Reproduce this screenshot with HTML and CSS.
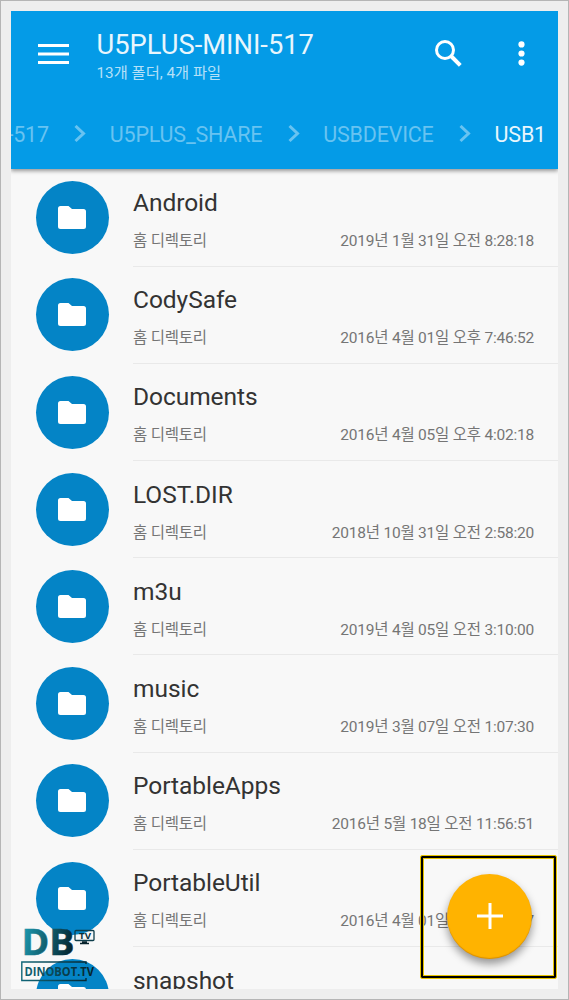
FILE: index.html
```html
<!DOCTYPE html>
<html lang="ko">
<head>
    <meta charset="UTF-8">
    <meta name="viewport" content="width=device-width, initial-scale=1.0">
    <title>U5PLUS-MINI-517</title>
    <link rel="stylesheet" href="styles.css">
</head>
<body>
    <!-- Shared icons -->
    <svg class="icon-defs" width="0" height="0">
        <symbol id="folder" viewBox="0 0 28 23">
            <path d="M2.5 0H10.5L14 3H25.5Q28 3 28 5.5V20.5Q28 23 25.5 23H2.5Q0 23 0 20.5V2.5Q0 0 2.5 0Z" fill="#fff"/>
        </symbol>
        <symbol id="chevron" viewBox="0 0 12 18">
            <path d="M1.5 1L9.5 8.5L1.5 16" fill="none" stroke="currentColor" stroke-width="3"/>
        </symbol>
    </svg>

    <div class="screen">
        <header>
            <div class="toolbar">
                <svg class="menu" viewBox="0 0 31 20"><path d="M0 1.5H31M0 10H31M0 18.5H31" stroke="#fff" stroke-width="3"/></svg>
                <div class="title">
                    <h1>U5PLUS-MINI-517</h1>
                    <p>13개 폴더, 4개 파일</p>
                </div>
                <svg class="search" viewBox="0 0 27 27"><circle cx="10" cy="10" r="8.5" fill="none" stroke="#fff" stroke-width="3"/><path d="M16 16L25.3 25.3" stroke="#fff" stroke-width="4"/></svg>
                <svg class="more" viewBox="0 0 7 25"><g fill="#fff"><circle cx="3.5" cy="3.4" r="3.1"/><circle cx="3.5" cy="12.5" r="3.1"/><circle cx="3.5" cy="21.6" r="3.1"/></g></svg>
            </div>
            <nav class="path">
                <span>U5PLUS-MINI-517</span>
                <svg><use href="#chevron"/></svg>
                <span>U5PLUS_SHARE</span>
                <svg><use href="#chevron"/></svg>
                <span>USBDEVICE</span>
                <svg><use href="#chevron"/></svg>
                <span class="current">USB1</span>
            </nav>
        </header>

        <!-- Folder list -->
        <ul class="files">
            <li>
                <div class="avatar"><svg><use href="#folder"/></svg></div>
                <div class="info"><h2>Android</h2><p><span>홈 디렉토리</span><time>2019년 1월 31일 오전 8:28:18</time></p></div>
            </li>
            <li>
                <div class="avatar"><svg><use href="#folder"/></svg></div>
                <div class="info"><h2>CodySafe</h2><p><span>홈 디렉토리</span><time>2016년 4월 01일 오후 7:46:52</time></p></div>
            </li>
            <li>
                <div class="avatar"><svg><use href="#folder"/></svg></div>
                <div class="info"><h2>Documents</h2><p><span>홈 디렉토리</span><time>2016년 4월 05일 오후 4:02:18</time></p></div>
            </li>
            <li>
                <div class="avatar"><svg><use href="#folder"/></svg></div>
                <div class="info"><h2>LOST.DIR</h2><p><span>홈 디렉토리</span><time>2018년 10월 31일 오전 2:58:20</time></p></div>
            </li>
            <li>
                <div class="avatar"><svg><use href="#folder"/></svg></div>
                <div class="info"><h2>m3u</h2><p><span>홈 디렉토리</span><time>2019년 4월 05일 오전 3:10:00</time></p></div>
            </li>
            <li>
                <div class="avatar"><svg><use href="#folder"/></svg></div>
                <div class="info"><h2>music</h2><p><span>홈 디렉토리</span><time>2019년 3월 07일 오전 1:07:30</time></p></div>
            </li>
            <li>
                <div class="avatar"><svg><use href="#folder"/></svg></div>
                <div class="info"><h2>PortableApps</h2><p><span>홈 디렉토리</span><time>2016년 5월 18일 오전 11:56:51</time></p></div>
            </li>
            <li>
                <div class="avatar"><svg><use href="#folder"/></svg></div>
                <div class="info"><h2>PortableUtil</h2><p><span>홈 디렉토리</span><time>2016년 4월 01일 오후 7:46:57</time></p></div>
            </li>
            <li>
                <div class="avatar"><svg><use href="#folder"/></svg></div>
                <div class="info"><h2>snapshot</h2></div>
            </li>
        </ul>

        <!-- Add button with highlight box -->
        <div class="highlight">
            <button class="fab" aria-label="추가">
                <svg viewBox="0 0 26 26"><path d="M13 0V26M0 13H26" stroke="#fff" stroke-width="3"/></svg>
            </button>
        </div>

        <!-- Watermark -->
        <svg class="watermark" viewBox="0 0 76 56">
            <defs>
                <linearGradient id="teal" gradientUnits="userSpaceOnUse" x1="2" y1="0" x2="54" y2="12">
                    <stop offset="0" stop-color="#1d9ab0"/>
                    <stop offset="1" stop-color="#04232d"/>
                </linearGradient>
                <linearGradient id="teal-wide" gradientUnits="userSpaceOnUse" x1="0" y1="0" x2="72" y2="0">
                    <stop offset="0" stop-color="#106779"/>
                    <stop offset="1" stop-color="#06222b"/>
                </linearGradient>
            </defs>
            <text class="mark-db" x="0.5" y="27.3" textLength="53" lengthAdjust="spacingAndGlyphs">DB</text>
            <rect x="54" y="2.5" width="19" height="10" rx="1" fill="none" stroke="#0d3d4b" stroke-width="1.3"/>
            <text class="mark-tv" x="58" y="10.5" textLength="12" lengthAdjust="spacingAndGlyphs">TV</text>
            <path d="M59 15.5H68M61 14H66" stroke="#06222b" stroke-width="1.6"/>
            <path d="M65 36V34H.8V52.5H65V50" fill="none" stroke="url(#teal-wide)" stroke-width="1.4"/>
            <text class="mark-name" x="3.5" y="48" textLength="69.5" lengthAdjust="spacingAndGlyphs">DINOBOT.TV</text>
        </svg>
    </div>
</body>
</html>
```
FILE: styles.css
```css
/* General styling */
* {
    box-sizing: border-box;
}

body {
    margin: 0;
    height: 1000px;
    padding: 10px;
    border: 1px solid #b5b5b5;
    background-color: #eee;
    font-family: Roboto, "Noto Sans CJK KR", sans-serif;
    overflow: hidden;
}

h1, h2, p {
    margin: 0;
    font-weight: 400;
}

.icon-defs {
    position: absolute;
}

.screen {
    position: relative;
    width: 547px;
    height: 978px;
    background-color: #f8f8f8;
    overflow: hidden;
}

/* Header */
header {
    position: relative;
    height: 158px;
    background-color: #049be7;
    color: #fff;
    box-shadow: 0 2px 4px rgba(0, 0, 0, 0.4);
}

.toolbar {
    display: flex;
    align-items: flex-start;
    padding: 18px 33px 0 27px;
    height: 100px;
}

.menu {
    width: 31px;
    height: 20px;
    margin-top: 15px;
}

.title {
    flex: 1;
    margin-left: 27.5px;
}

.title h1 {
    font-size: 27.3px;
    line-height: 32px;
    color: #e8f6fd;
}

.title p {
    padding-top: 1px;
    font-size: 15.3px;
    line-height: 22px;
    color: #b4e0f8;
}

.search {
    width: 27px;
    height: 27px;
    margin: 11px 56px 0 0;
}

.more {
    width: 7px;
    height: 25px;
    margin-top: 12px;
}

.path {
    display: flex;
    justify-content: flex-end;
    align-items: center;
    height: 46px;
    padding-right: 12px;
    overflow: hidden;
    white-space: nowrap;
    font-size: 21.5px;
    letter-spacing: -0.2px;
    color: #68c3f1;
}

.path svg {
    flex: none;
    width: 12px;
    height: 18px;
    margin: 0 23.5px 0 25.5px;
}

.path .current {
    color: #e8f6fd;
}

/* Folder list */
.files {
    margin: 0;
    padding: 0.5px 0 0;
    list-style: none;
}

.files li {
    display: flex;
    height: 97.2px;
    padding-left: 24.5px;
}

.avatar {
    display: flex;
    flex: none;
    align-items: center;
    justify-content: center;
    width: 73px;
    height: 73px;
    margin-top: 11.7px;
    border-radius: 50%;
    background-color: #0484c6;
}

.avatar svg {
    width: 28px;
    height: 23px;
}

.info {
    flex: 1;
    margin-left: 24.5px;
    padding-top: 17.6px;
    border-bottom: 1px solid #e9e9e9;
}

.info h2 {
    font-size: 24.5px;
    line-height: 32px;
    letter-spacing: -0.05px;
    color: #333;
}

.info p {
    display: flex;
    justify-content: space-between;
    padding: 11px 24px 0 0;
    font-size: 15.5px;
    line-height: 22px;
    letter-spacing: -0.22px;
    color: #757575;
}

/* Add button */
.highlight {
    position: absolute;
    left: 409px;
    top: 844px;
    display: flex;
    align-items: center;
    justify-content: center;
    width: 137px;
    height: 124px;
    padding: 0 0 2px 2px;
    border: 1px solid #e6c400;
    border-radius: 2px;
    box-shadow: inset 0 0 0 2px #000, inset 0 0 0 3px #e6c400;
}

.fab {
    display: flex;
    align-items: center;
    justify-content: center;
    width: 85px;
    height: 85px;
    padding: 0;
    border: none;
    border-radius: 50%;
    background-color: #ffb300;
    box-shadow: 0 5px 9px rgba(0, 0, 0, 0.4), inset 0 -1px 1px rgba(160, 90, 0, 0.4);
}

.fab svg {
    width: 26px;
    height: 26px;
}

/* Watermark */
.watermark {
    position: absolute;
    left: 10px;
    top: 917px;
    width: 76px;
    height: 56px;
    font-family: "Open Sans", sans-serif;
    font-weight: 700;
}

.mark-db {
    font-size: 36px;
    fill: url(#teal);
    stroke: url(#teal);
    stroke-width: 0.5px;
}

.mark-tv {
    font-size: 9px;
    fill: #0a303c;
}

.mark-name {
    font-size: 13px;
    fill: url(#teal-wide);
}
```
